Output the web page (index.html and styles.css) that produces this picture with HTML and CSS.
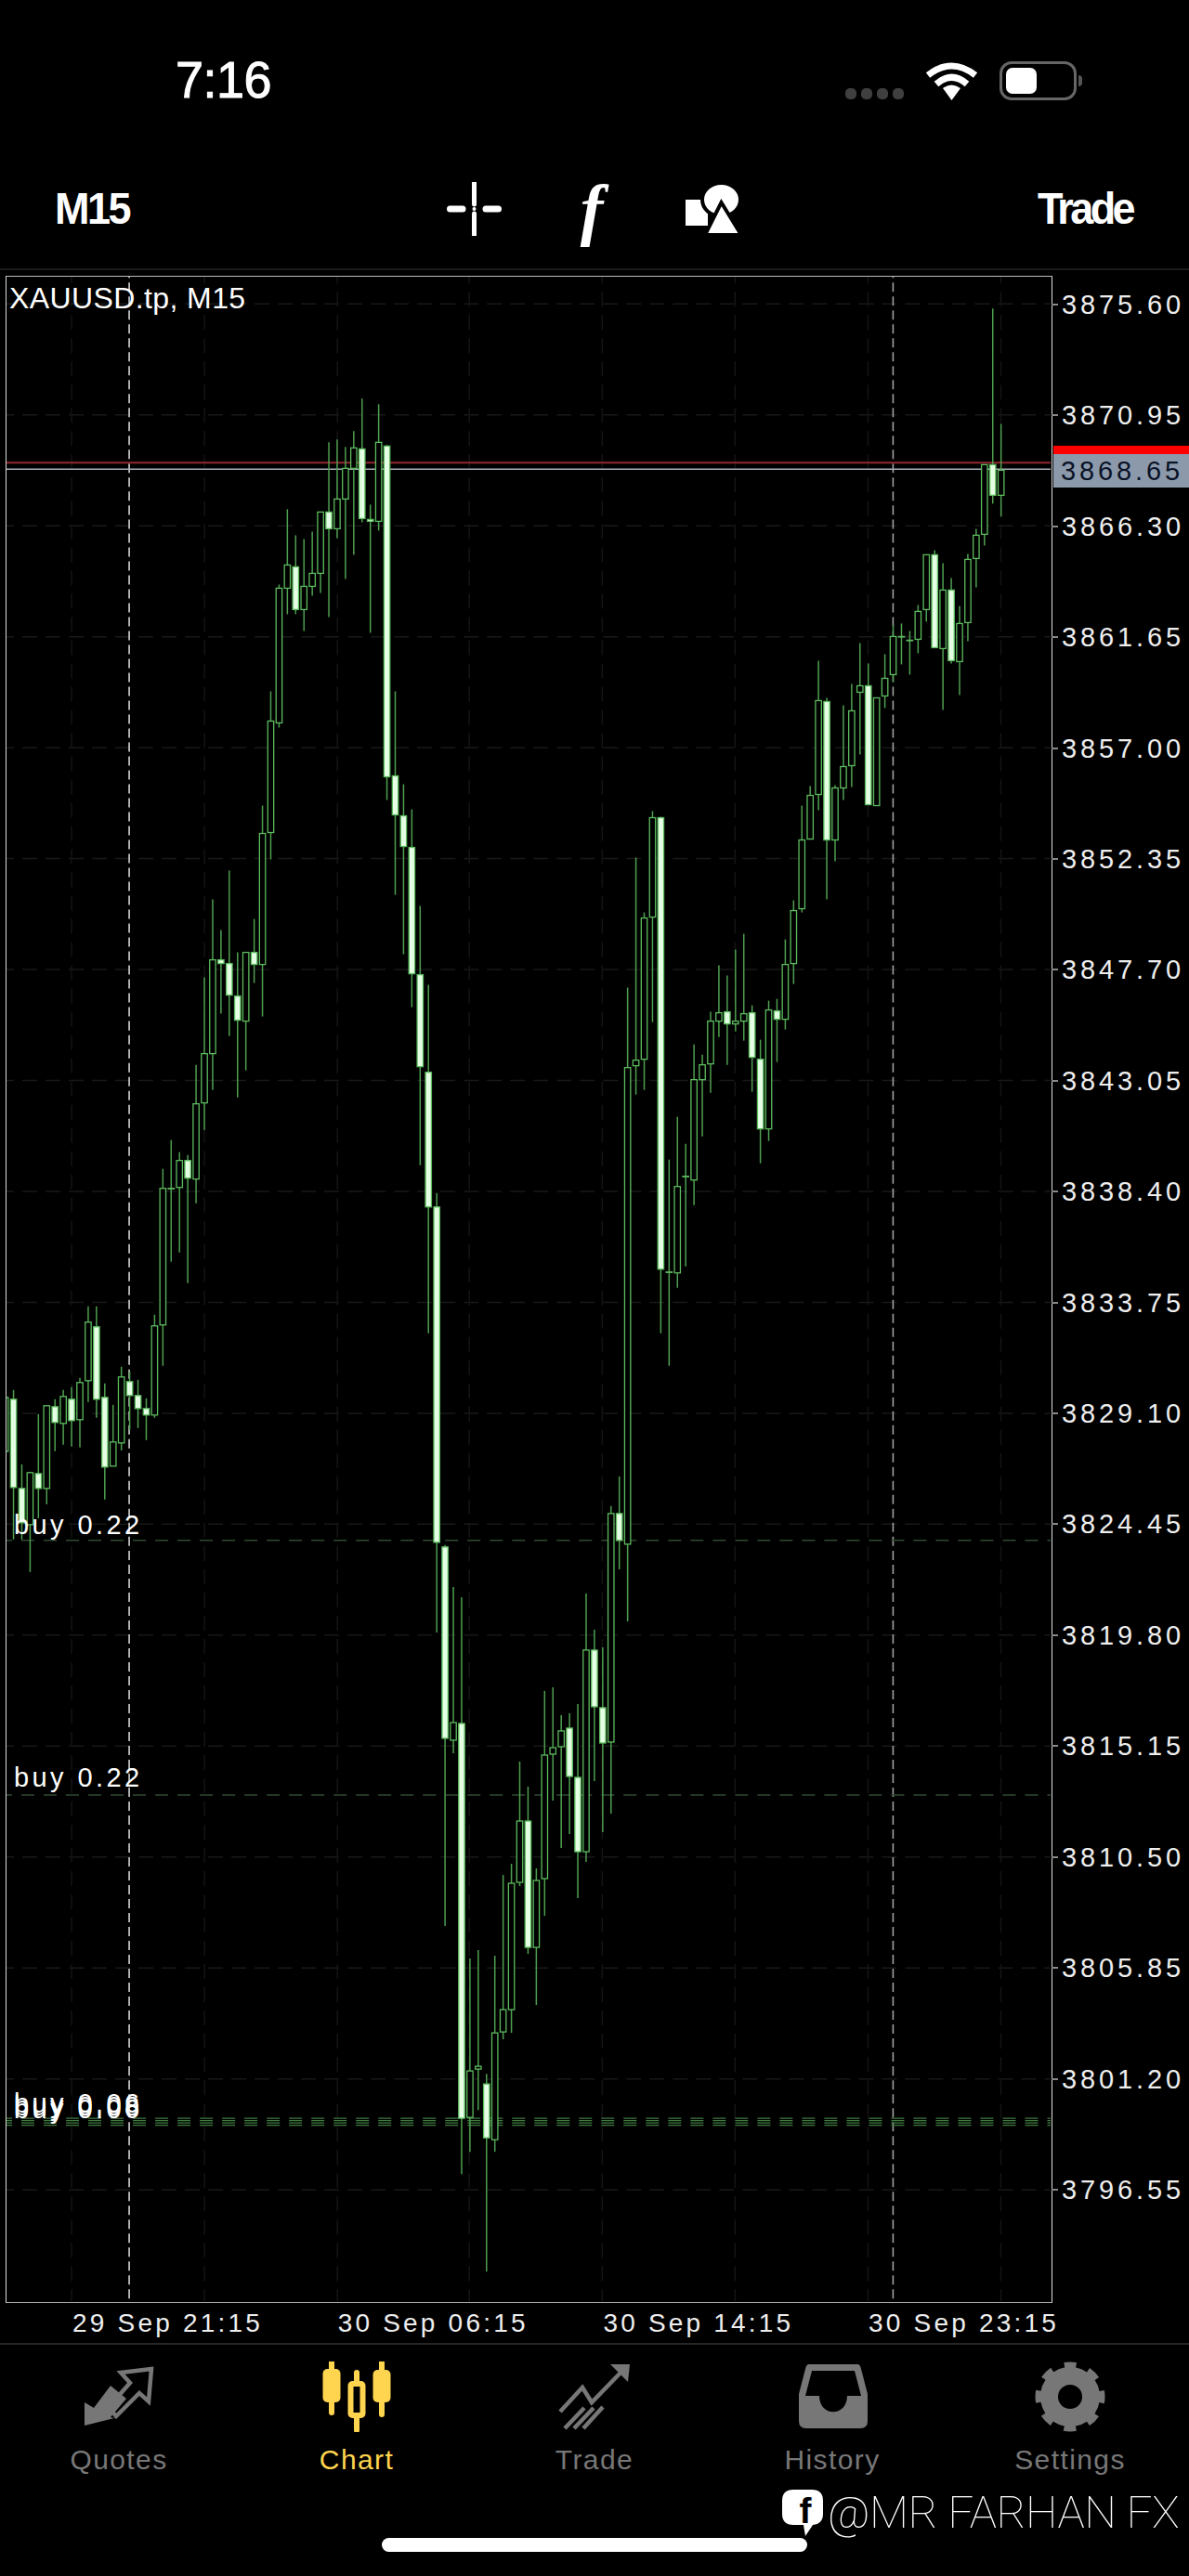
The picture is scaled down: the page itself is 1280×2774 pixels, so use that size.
FILE: index.html
```html
<!DOCTYPE html>
<html lang="en">
<head>
<meta charset="utf-8">
<title>XAUUSD.tp, M15</title>
<link rel="stylesheet" href="styles.css">
</head>
<body>
<div class="screen">
  <header class="status">
    <div class="clock">7:16</div>
    <div class="status-icons">
      <div class="signal"><i></i><i></i><i></i><i></i></div>
      <svg class="wifi" viewBox="0 0 57 41"><path d="M3 14Q28.500-6 54 14" class="wifi-arc"/><path d="M12 23.500Q28.500 9 45 23.500" class="wifi-arc"/><path d="M28.500 41L19 28Q28.500 21 38 28Z" class="wifi-dot"/></svg>
      <div class="battery"><div class="battery-level"></div></div>
      <div class="battery-nub"></div>
    </div>
  </header>

  <nav class="toolbar">
    <div class="tool-label">M15</div>
    <div class="tool-icons">
      <svg class="ic-cross" viewBox="0 0 59 58"><path d="M29.500 0V24M29.500 34V58" class="cross-v"/><path d="M3.500 29H17M42 29H55.500" class="cross-h"/><circle cx="29.500" cy="29" r="2" class="cross-dot"/></svg>
      <span class="ic-func">f</span>
      <svg class="ic-shapes" viewBox="0 0 60 58"><path d="M0 19H24V47H0Z" class="white"/><ellipse cx="38.500" cy="19" rx="20.500" ry="18" class="white cut"/><path d="M38.500 22L60 57H21Z" class="white cut"/></svg>
    </div>
    <div class="tool-label tool-right">Trade</div>
  </nav>

  <main class="chart">
    <div class="chart-row">
      <div class="plot">
        <svg id="candles" class="plot-svg" viewBox="8 299 1123 2178"></svg>
        <div class="symbol">XAUUSD.tp, M15</div>
        <div class="order order-a">buy 0.22</div>
        <div class="order order-b">buy 0.22</div>
        <div class="order order-c">buy 0.06</div>
        <div class="order order-d">buy 0.08</div>
        <div class="order order-e">buy 0.06</div>
      </div>
      <div class="prices">
        <div class="price">3875.60</div>
        <div class="price">3870.95</div>
        <div class="price">3866.30</div>
        <div class="price">3861.65</div>
        <div class="price">3857.00</div>
        <div class="price">3852.35</div>
        <div class="price">3847.70</div>
        <div class="price">3843.05</div>
        <div class="price">3838.40</div>
        <div class="price">3833.75</div>
        <div class="price">3829.10</div>
        <div class="price">3824.45</div>
        <div class="price">3819.80</div>
        <div class="price">3815.15</div>
        <div class="price">3810.50</div>
        <div class="price">3805.85</div>
        <div class="price">3801.20</div>
        <div class="price">3796.55</div>
      </div>
      <div class="tag-red"></div>
      <div class="tag-bid">3868.65</div>
    </div>
    <div class="times">
      <div class="time">29 Sep 21:15</div>
      <div class="time">30 Sep 06:15</div>
      <div class="time">30 Sep 14:15</div>
      <div class="time">30 Sep 23:15</div>
    </div>
  </main>

  <footer class="tabs">
    <div class="tab">
      <svg class="tab-icon" viewBox="0 0 80 76"><path d="M3 69V44L13 50L31 26L48 40L31 60L35 61Z" class="grey"/><path d="M75 8L42 12L52 23L29 49L37 59L62 34L72 43Z" class="grey-line"/></svg>
      <div class="tab-label">Quotes</div>
    </div>
    <div class="tab tab-on">
      <svg class="tab-icon" viewBox="0 0 80 76">
        <path d="M13 1V55M40 12V74M67 1V57" class="candle-wick"/>
        <rect x="3.500" y="8" width="19" height="36" rx="5" class="candle-body"/>
        <rect x="33.500" y="24" width="13" height="34" rx="2" class="candle-open"/>
        <rect x="57.500" y="9" width="19" height="35" rx="5" class="candle-body"/>
      </svg>
      <div class="tab-label">Chart</div>
    </div>
    <div class="tab">
      <svg class="tab-icon" viewBox="0 0 80 76"><path d="M3 54L27 28L37 44L71 9M8 72L29 50M18 72L39 50M28 72L49 49" class="grey-line"/><path d="M57 3H78L76 22Z" class="grey"/></svg>
      <div class="tab-label">Trade</div>
    </div>
    <div class="tab">
      <svg class="tab-icon" viewBox="0 0 80 76"><path d="M15 3H67Q70 3 71 8L78 35V64Q78 72 70 72H12Q4 72 4 64V35L11 8Q12 3 15 3Z" class="grey"/><path d="M11 37L18 10H64L71 37H56C56 60 26 60 26 37Z" class="black"/></svg>
      <div class="tab-label">History</div>
    </div>
    <div class="tab">
      <svg class="tab-icon" viewBox="0 0 80 76"><circle cx="40" cy="38" r="22.500" class="gear-ring"/><circle cx="40" cy="38" r="32" class="gear-teeth"/></svg>
      <div class="tab-label">Settings</div>
    </div>
    <div class="watermark">
      <svg class="fb" viewBox="0 0 44 50"><path d="M12 0H32Q44 0 44 12V26Q44 37 33 38L25 50L23 38H12Q0 38 0 26V12Q0 0 12 0Z" class="white"/><text x="25" y="36" class="fb-f">f</text></svg>
      <span class="watermark-text">@MR FARHAN FX</span>
    </div>
    <div class="home"></div>
  </footer>
</div>
<script src="chart.js"></script>
</body>
</html>
```
FILE: styles.css
```css
* { box-sizing: border-box; }
html, body { margin: 0; background: #000; }
body { font-family: "Liberation Sans", Arial, sans-serif; color: #fff; }
.screen { width: 1280px; height: 2774px; overflow: hidden; background: #000; }

/* status bar */
.status { height: 160px; padding: 10px 115px 0 189px; display: flex; align-items: center; justify-content: space-between; }
.clock { font-size: 54px; font-weight: 400; -webkit-text-stroke: 1px #fff; letter-spacing: -0.500px; line-height: 1; transform: scaleY(1.03); }
.status-icons { display: flex; align-items: center; height: 42px; margin-top: 4px; }
.signal { display: flex; gap: 5px; margin: 27px 23px 0 0; }
.signal i { width: 12px; height: 12px; border-radius: 5px; background: #3f3f3f; }
.wifi { width: 57px; height: 41px; margin-right: 23px; }
.wifi-arc { fill: none; stroke: #fff; stroke-width: 7; }
.wifi-dot { fill: #fff; }
.battery { width: 83px; height: 42px; border: 3px solid #666; border-radius: 13px; padding: 4px 0 0 4px; }
.battery-level { width: 33px; height: 28px; border-radius: 7px; background: #fff; }
.battery-nub { width: 4px; height: 12px; margin-left: 2px; border-radius: 0 4px 4px 0; background: #555; }

/* toolbar */
.toolbar { height: 131px; padding: 0 61px 0 59px; border-bottom: 2px solid #1a1a1a; display: grid; grid-template-columns: 1fr auto 1fr; align-items: center; }
.tool-label { font-size: 45px; font-weight: 700; letter-spacing: -2.500px; line-height: 1; transform: scaleY(1.08); }
.tool-right { text-align: right; letter-spacing: -3.600px; }
.tool-icons { display: flex; align-items: center; gap: 80px; margin-right: 2px; }
.ic-cross { width: 59px; height: 58px; }
.cross-v { stroke: #fff; stroke-width: 5; fill: none; stroke-linecap: round; }
.cross-h { stroke: #fff; stroke-width: 7; fill: none; stroke-linecap: round; }
.cross-dot { fill: #fff; }
.ic-func { width: 38px; font-family: "Liberation Serif", serif; font-style: italic; font-weight: 700; font-size: 74px; line-height: 58px; text-align: center; margin-right: -1px; margin-left: -2px; }
.ic-shapes { width: 60px; height: 58px; margin: 0 -3px 0 3px; }
.white { fill: #fff; }
.cut { stroke: #000; stroke-width: 4; }

/* chart */
.chart { height: 2232px; padding-top: 6px; }
.chart-row { display: flex; position: relative; height: 2183px; }
.plot { position: relative; margin-left: 6px; width: 1127px; height: 2183px; border: 1.500px solid #ddd; border-bottom-color: #aaa; border-top-color: #bbb; flex: none; }
.plot-svg { position: absolute; left: 0; top: 0; width: 1123.500px; height: 2179.500px; display: block; }
.symbol { position: absolute; left: 3px; top: 5px; font-size: 32px; line-height: 36px; letter-spacing: 0.400px; }
.order { position: absolute; left: 8px; font-size: 29px; line-height: 32px; letter-spacing: 3.400px; white-space: nowrap; }
.order-a { top: 1328px; }
.order-b { top: 1600px; }
.order-c { top: 1951px; }
.order-d { top: 1954px; }
.order-e { top: 1957px; }
.prices { flex: none; padding-top: 11px; }
.price { height: 119.410px; padding-left: 10px; font-size: 29px; line-height: 40px; letter-spacing: 3.900px; position: relative; color: #eee; white-space: nowrap; }
.price::before { content: ""; position: absolute; left: -1px; top: 19px; width: 7px; height: 2px; background: #888; }
.tag-red { position: absolute; left: 1134px; right: 0; top: 183px; height: 9px; background: #f00; width: 146px; }
.tag-bid { position: absolute; left: 1134px; top: 192px; width: 146px; height: 36px; padding-left: 8px; background: #8b99ab; color: #0a1226; font-size: 29px; line-height: 36px; letter-spacing: 3.900px; white-space: nowrap; }
.times { display: grid; grid-template-columns: repeat(4, 285.700px); padding-left: 78px; height: 43px; }
.time { font-size: 28px; line-height: 44px; letter-spacing: 3.200px; color: #eee; white-space: nowrap; }

/* tabs */
.tabs { position: relative; height: 251px; border-top: 2px solid #262626; display: grid; grid-template-columns: repeat(5, 256px); align-content: start; padding: 18px 0 0; }
.tab { display: flex; flex-direction: column; align-items: center; color: #777; }
.tab-on { color: #ffd54f; }
.tab-icon { width: 80px; height: 76px; display: block; }
.tab-label { margin-top: 12px; font-size: 30px; line-height: 36px; letter-spacing: 1.400px; white-space: nowrap; }
.grey { fill: #777; }
.grey-line { fill: none; stroke: #777; stroke-width: 4.500; stroke-linejoin: miter; }
.black { fill: #000; }
.candle-wick { stroke: #ffd54f; stroke-width: 6; fill: none; stroke-linecap: round; }
.candle-body { fill: #ffd54f; }
.candle-open { fill: #000; stroke: #ffd54f; stroke-width: 6; }
.gear-ring { fill: none; stroke: #777; stroke-width: 19; }
.gear-teeth { fill: none; stroke: #777; stroke-width: 11; stroke-dasharray: 12.130 13; stroke-dashoffset: 6.060; transform: rotate(-90deg); transform-origin: 40px 38px; }
.watermark { position: absolute; left: 842px; top: 156px; display: flex; align-items: flex-start; gap: 5px; }
.fb { width: 44px; height: 50px; display: block; }
.fb-f { font-family: "Liberation Sans", sans-serif; font-weight: 700; font-size: 39px; fill: #000; text-anchor: middle; }
.watermark-text { font-family: Roboto, sans-serif; font-weight: 100; font-size: 49px; line-height: 50px; letter-spacing: -0.500px; white-space: nowrap; color: #fff; }
.home { position: absolute; left: 411px; top: 208px; width: 458px; height: 15px; border-radius: 8px; background: #fff; }
```
FILE: chart.js
```js
// [high, bodyTop, bodyBottom, low, filled]
var data = [
[1505,1505,1563,1563,0],[1497,1507,1602,1658,1],[1577,1603,1640,1658,1],[1585,1586,1642,1693,0],[1523,1587,1603,1635,1],
[1514,1514,1603,1620,0],[1507,1515,1532,1563,1],[1497,1504,1533,1556,0],[1494,1507,1530,1558,1],[1484,1489,1529,1559,0],
[1407,1424,1487,1510,0],[1407,1429,1507,1527,1],[1490,1505,1580,1615,1],[1513,1553,1579,1579,0],[1472,1483,1554,1562,0],
[1477,1488,1503,1540,1],[1486,1503,1517,1538,1],[1506,1517,1524,1551,1],[1416,1428,1524,1527,0],[1259,1280,1427,1471,0],
[1228,1280,1280,1359,0],[1241,1250,1279,1349,0],[1244,1250,1269,1382,1],[1147,1189,1270,1296,0],[1053,1135,1188,1217,0],
[969,1034,1135,1174,0],[1002,1034,1038,1092,1],[938,1038,1072,1116,1],[1026,1073,1099,1182,1],[1026,1026,1100,1153,0],
[990,1026,1039,1059,1],[868,898,1039,1095,0],[745,777,897,926,0],[630,634,779,784,0],[549,609,634,662,0],
[577,611,657,662,1],[581,632,657,680,0],[573,618,632,642,0],[552,552,618,639,0],[477,552,570,665,1],
[474,538,570,580,0],[482,505,538,624,0],[465,483,505,598,0],[430,484,559,563,1],[544,560,562,682,1],
[436,477,562,572,0],[480,481,837,862,1],[745,836,878,964,1],[845,879,912,1028,1],[872,913,1049,1085,1],
[976,1050,1149,1255,1],[1061,1155,1300,1436,1],[1285,1300,1661,1758,1],[1664,1666,1872,2074,1],[1709,1855,1874,1888,0],
[1720,1856,2281,2341,1],[2109,2230,2280,2317,0],[2100,2225,2228,2272,0],[2233,2244,2302,2446,1],[2106,2189,2304,2317,0],
[2019,2164,2188,2196,0],[2007,2028,2164,2189,0],[1897,1961,2027,2031,0],[1924,1961,2097,2104,1],[2012,2025,2097,2159,0],
[1821,1890,2023,2063,0],[1817,1882,1889,1939,0],[1847,1864,1881,1990,0],[1845,1861,1913,1975,1],[1835,1914,1994,2044,1],
[1716,1777,1994,2005,0],[1755,1777,1838,1918,1],[1774,1839,1877,1973,1],[1622,1630,1876,1953,0],[1590,1630,1659,1690,1],
[1064,1150,1663,1746,0],[924,1142,1148,1179,0],[983,989,1141,1174,0],[874,881,988,1101,0],[880,881,1367,1436,1],
[1249,1370,1370,1471,0],[1203,1278,1371,1387,0],[1232,1267,1267,1364,0],[1125,1163,1271,1298,0],[1136,1147,1163,1224,0],
[1090,1100,1146,1177,0],[1040,1091,1100,1117,0],[1051,1090,1103,1147,1],[1023,1100,1103,1111,0],[1006,1092,1100,1121,0],
[1083,1091,1139,1176,1],[1120,1141,1216,1253,1],[1078,1088,1216,1229,0],[1076,1089,1098,1144,1],[1012,1039,1098,1109,0],
[970,981,1038,1060,0],[868,905,979,983,0],[847,857,904,904,0],[712,755,856,873,0],[752,756,905,969,1],
[846,849,905,928,0],[760,826,849,862,0],[737,766,825,848,0],[693,739,746,813,0],[715,739,867,867,1],
[752,752,868,868,0],[705,731,750,763,0],[674,686,727,735,0],[672,686,686,716,0],[680,690,690,727,0],
[652,659,689,704,0],[598,598,657,670,0],[593,598,698,698,1],[607,636,699,765,0],[623,636,712,715,1],
[653,672,713,749,0],[597,603,671,691,0],[570,577,602,633,0],[501,501,576,588,0],[333,501,534,543,1],
[457,507,534,557,0]
];
var NS = "http://www.w3.org/2000/svg";
var svg = document.getElementById("candles");
function add(tag, attrs) {
  var el = document.createElementNS(NS, tag);
  for (var k in attrs) el.setAttribute(k, attrs[k]);
  svg.appendChild(el);
}
function line(x1, y1, x2, y2, color, w, dash) {
  add("line", { x1: x1, y1: y1, x2: x2, y2: y2, stroke: color, "stroke-width": w, "stroke-dasharray": dash || "none" });
}
var y, x, i;
for (i = 0; i < 18; i++) { y = 328 + 119.41 * i; line(0, y, 1140, y, "#181818", 1.5, "16 9"); }
var verts = [78, 221, 364, 506, 649, 792, 935, 1078];
for (i = 0; i < verts.length; i++) line(verts[i], 290, verts[i], 2480, "#141414", 1.5, "16 9");
line(140, 290, 140, 2480, "#e0e0e0", 1.5, "10 5");
line(962, 290, 962, 2480, "#a8a8a8", 1.5, "10 5");
line(0, 1659, 1140, 1659, "#2f4a30", 1.5, "14 10");
line(0, 1933, 1140, 1933, "#2f4a30", 1.5, "14 10");
[2281, 2283.5, 2286, 2288.5].forEach(function (ly) { line(0, ly, 1140, ly, "#3f7a3f", 1.2, "14 10"); });
line(0, 499, 1140, 499, "#92282f", 2);
line(0, 506, 1140, 506, "#a9afb8", 1.5);
data.forEach(function (c, n) {
  var cx = 6.6 + 8.93 * n;
  line(cx, c[0], cx, c[3], "#4f9f50", 1.5);
  add("rect", {
    x: cx - 3.2, y: c[1], width: 6.4, height: Math.max(c[2] - c[1], 0.5),
    fill: c[4] ? "#e4ffe4" : "#000", stroke: "#5dbb5e", "stroke-width": 1.3
  });
});
```
